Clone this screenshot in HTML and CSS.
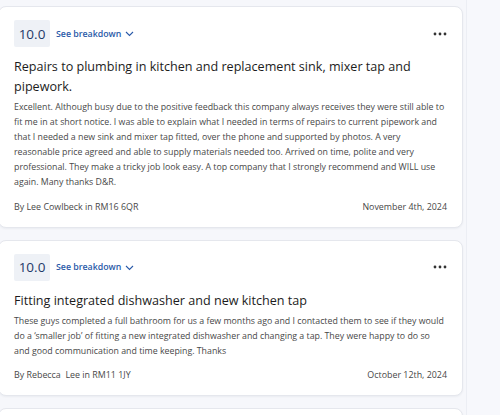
FILE: index.html
```html
<!DOCTYPE html>
<html lang="en">
<head>
<meta charset="utf-8">
<title>Reviews</title>
<link rel="stylesheet" href="styles.css">
</head>
<body>
<div class="layout">
  <main class="reviews">
    <article class="card">
      <div class="card-head">
        <div class="score">10.0</div>
        <button class="breakdown">See breakdown
          <svg class="chev" width="9" height="6" viewBox="0 0 9 6"><path d="M1 1 L4.5 4.5 L8 1" fill="none" stroke="#2a5aa8" stroke-width="1.1"/></svg>
        </button>
        <svg class="more" width="14" height="4" viewBox="0 0 14 4"><circle cx="2" cy="2" r="1.4"/><circle cx="7" cy="2" r="1.4"/><circle cx="12" cy="2" r="1.4"/></svg>
      </div>
      <h2 class="title">Repairs to plumbing in kitchen and replacement sink, mixer tap and pipework.</h2>
      <p class="body">Excellent. Although busy due to the positive feedback this company always receives they were still able to fit me in at short notice. I was able to explain what I needed in terms of repairs to current pipework and that I needed a new sink and mixer tap fitted, over the phone and supported by photos. A very reasonable price agreed and able to supply materials needed too. Arrived on time, polite and very professional. They make a tricky job look easy. A top company that I strongly recommend and WILL use again. Many thanks D&amp;R.</p>
      <div class="card-foot">
        <span>By Lee Cowlbeck in RM16 6QR</span>
        <span>November 4th, 2024</span>
      </div>
    </article>
    <article class="card">
      <div class="card-head">
        <div class="score">10.0</div>
        <button class="breakdown">See breakdown
          <svg class="chev" width="9" height="6" viewBox="0 0 9 6"><path d="M1 1 L4.5 4.5 L8 1" fill="none" stroke="#2a5aa8" stroke-width="1.1"/></svg>
        </button>
        <svg class="more" width="14" height="4" viewBox="0 0 14 4"><circle cx="2" cy="2" r="1.4"/><circle cx="7" cy="2" r="1.4"/><circle cx="12" cy="2" r="1.4"/></svg>
      </div>
      <h2 class="title">Fitting integrated dishwasher and new kitchen tap</h2>
      <p class="body">These guys completed a full bathroom for us a few months ago and I contacted them to see if they would do a ‘smaller job’ of fitting a new integrated dishwasher and changing a tap. They were happy to do so and good communication and time keeping. Thanks</p>
      <div class="card-foot">
        <span>By Rebecca&nbsp; Lee in RM11 1JY</span>
        <span>October 12th, 2024</span>
      </div>
    </article>
    <article class="card"></article>
  </main>
  <aside class="side"></aside>
</div>
</body>
</html>
```
FILE: styles.css
```css
html, body {
  margin: 0;
  padding: 0;
  background: #f6f7fb;
  font-family: "Open Sans", "Liberation Sans", sans-serif;
  color: #222;
}
.layout {
  display: flex;
  height: 415px;
  overflow: hidden;
}
.reviews {
  width: 465px;
  margin-left: -2px;
  padding-top: 6px;
  padding-right: 3px;
  display: flex;
  flex-direction: column;
  gap: 12px;
  border-right: 1px solid #eceef4;
}
.side {
  flex: 1;
  background: #f7f8fc;
}
.card {
  background: #fff;
  border: 1px solid #e5e7ed;
  border-radius: 8px;
  padding: 13px 15px 12px 15px;
  box-shadow: 0 1px 2px rgba(20, 30, 60, 0.05);
  flex-shrink: 0;
}
.card:last-child {
  height: 40px;
}
.card-head {
  display: flex;
  align-items: center;
  height: 27px;
}
.score {
  background: #eef1f6;
  color: #1f3a68;
  font-size: 13.5px;
  width: 36px;
  height: 27px;
  display: flex;
  align-items: center;
  justify-content: center;
  border-radius: 2px;
}
.breakdown {
  border: 0;
  background: none;
  padding: 0;
  margin-left: 6px;
  font-family: inherit;
  font-size: 8.8px;
  font-weight: 600;
  color: #2a5aa8;
  display: flex;
  align-items: center;
  gap: 4px;
}
.chev {
  margin-top: 1px;
}
.more {
  margin-left: auto;
  fill: #333;
}
.title {
  margin: 10px 0 0;
  font-size: 12.6px;
  font-weight: 500;
  line-height: 20px;
  color: #1c1c1c;
}
.body {
  margin: 3px 0 0;
  font-size: 8.8px;
  line-height: 15.1px;
  color: #484848;
}
.card-foot {
  display: flex;
  justify-content: space-between;
  margin-top: 8px;
  font-size: 8.9px;
  line-height: 16px;
  color: #484848;
}
```
